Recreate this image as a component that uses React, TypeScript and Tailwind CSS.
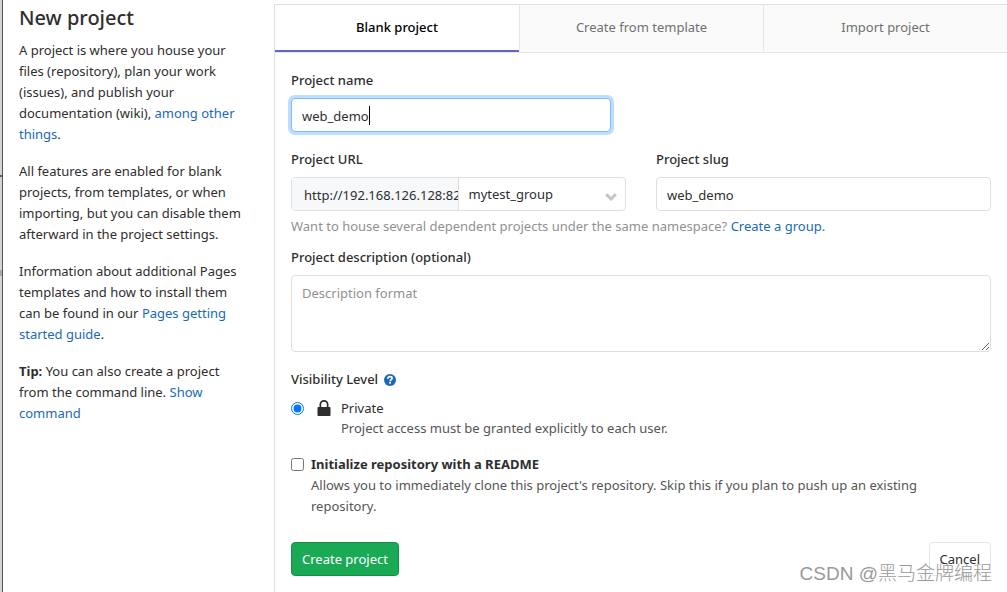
import React, { useState } from 'react';

const tabs = [
  { id: 'blank', title: 'Blank project' },
  { id: 'template', title: 'Create from template' },
  { id: 'import', title: 'Import project' },
];

const linkClass = 'text-[#1b69b6] hover:underline';
const labelClass = 'block mb-[7px] font-medium';
const inputClass = 'h-[34px] w-full rounded-[4px] border border-[#dfdfdf] bg-white px-[10px] pt-[2px] outline-none';

function LockIcon() {
  return (
    <svg viewBox="0 0 14 16" className="h-4 w-[14px]" fill="#2e2e2e" aria-hidden="true">
      <path d="M7 0a4.5 4.5 0 0 0-4.5 4.5V7H1.2A.7.7 0 0 0 .5 7.7v7.6a.7.7 0 0 0 .7.7h11.6a.7.7 0 0 0 .7-.7V7.7a.7.7 0 0 0-.7-.7h-1.3V4.5A4.5 4.5 0 0 0 7 0zm0 1.7a2.8 2.8 0 0 1 2.8 2.8V7H4.2V4.5A2.8 2.8 0 0 1 7 1.7z" />
    </svg>
  );
}

function HelpIcon() {
  return (
    <svg viewBox="0 0 12 12" className="size-3" aria-hidden="true">
      <circle cx="6" cy="6" r="6" fill="#1b69b6" />
      <path d="M3.9 4.7C4 3.3 4.9 2.7 6 2.7c1.3 0 2.1.7 2.1 1.6 0 1.4-1.9 1.3-1.9 2.9" fill="none" stroke="#fff" strokeWidth="1.7" />
      <rect x="5.2" y="8" width="1.8" height="1.6" fill="#fff" />
    </svg>
  );
}

export default function NewProject() {
  const [activeTab, setActiveTab] = useState('blank');
  const [name, setName] = useState('web_demo');
  const [slug, setSlug] = useState('web_demo');

  return (
    <div className="relative flex min-h-screen overflow-hidden bg-white font-['Noto_Sans','Open_Sans',sans-serif] text-[13px] leading-[21px] text-[#2e2e2e]">
      <div className="flex w-[3px] shrink-0 flex-col border-r border-[#555] bg-[#d4d4d4]">
        <div className="mt-[175px] h-[2px] bg-[#6650a8]" />
        <div className="mt-[93px] h-[6px] bg-[#a8a8a8]" />
      </div>

      <aside className="w-[271px] shrink-0 pl-4 pr-6 pt-1">
        <h1 className="mb-2 text-[20px] font-medium leading-7">New project</h1>
        <p className="mb-4">
          A project is where you house your files (repository), plan your work (issues), and publish your documentation (wiki),{' '}
          <a href="#features" className={linkClass}>among other things</a>.
        </p>
        <p className="mb-4">
          All features are enabled for blank projects, from templates, or when importing, but you can disable them afterward in the project settings.
        </p>
        <p className="mb-4">
          Information about additional Pages templates and how to install them can be found in our{' '}
          <a href="#pages" className={linkClass}>Pages getting started guide</a>.
        </p>
        <p>
          <strong>Tip:</strong> You can also create a project from the command line.{' '}
          <a href="#command" className={linkClass}>Show command</a>
        </p>
      </aside>

      <main className="mt-1 min-w-0 flex-1 border-l border-t border-[#dfdfdf]">
        <div role="tablist" className="grid grid-cols-3 border-b border-[#e5e5e5]">
          {tabs.map((tab) => (
            <button
              key={tab.id}
              type="button"
              role="tab"
              aria-selected={activeTab === tab.id}
              onClick={() => setActiveTab(tab.id)}
              className={`h-[47px] border-b-2 not-first:border-l not-first:border-l-[#e5e5e5] ${
                activeTab === tab.id
                  ? 'border-b-[#6666c4] bg-white font-medium text-black'
                  : 'border-b-transparent bg-[#fafafa] text-[#707070]'
              }`}
            >
              {tab.title}
            </button>
          ))}
        </div>

        <form className="px-4 pb-4 pt-[17px]" onSubmit={(e) => e.preventDefault()}>
          <div className="mb-[17px]">
            <label htmlFor="name" className={labelClass}>Project name</label>
            <div className="relative max-w-80">
              <input
                id="name"
                value={name}
                onChange={(e) => setName(e.target.value)}
                className="h-[34px] w-full rounded-[4px] border border-[#80bdff] bg-white px-[10px] pt-[2px] caret-transparent shadow-[0_0_0_3px_#bfdeff] outline-none"
              />
              <span className="absolute left-[78px] top-2 h-[19px] w-px bg-black" />
            </div>
          </div>

          <div className="grid grid-cols-2 gap-[30px]">
            <div>
              <label htmlFor="namespace" className={labelClass}>Project URL</label>
              <div className="flex h-[34px] rounded-[4px] border border-[#dfdfdf]">
                <div className="flex w-1/2 items-center overflow-hidden whitespace-nowrap border-r border-[#dfdfdf] bg-[#f6f8fa] pl-3 pt-[2px]">
                  http://192.168.126.128:82
                </div>
                <div className="relative w-1/2">
                  <select id="namespace" className="h-full w-full appearance-none bg-transparent px-[10px] outline-none">
                    <option>mytest_group</option>
                  </select>
                  <svg viewBox="0 0 12 8" className="pointer-events-none absolute right-2 top-[15px] h-2 w-3" fill="none" stroke="#c4c4c4" strokeWidth="3" aria-hidden="true">
                    <path d="M1.2 1.2 6 6l4.8-4.8" />
                  </svg>
                </div>
              </div>
            </div>
            <div>
              <label htmlFor="slug" className={labelClass}>Project slug</label>
              <input id="slug" value={slug} onChange={(e) => setSlug(e.target.value)} className={inputClass} />
            </div>
          </div>
          <p className="mb-[10px] mt-[5px] text-[#919191]">
            Want to house several dependent projects under the same namespace?{' '}
            <a href="#group" className={linkClass}>Create a group.</a>
          </p>

          <label htmlFor="description" className={labelClass}>Project description (optional)</label>
          <textarea
            id="description"
            placeholder="Description format"
            className="mb-[17px] block h-[77px] w-full rounded-[4px] border border-[#dfdfdf] px-[10px] py-[7px] outline-none placeholder:text-[#919191]"
          />

          <fieldset className="mb-4">
            <legend className="mb-2 flex items-center gap-[6px] font-medium">
              Visibility Level
              <a href="#visibility" aria-label="Visibility help"><HelpIcon /></a>
            </legend>
            <label className="flex items-start">
              <input type="radio" name="visibility" defaultChecked className="mt-1 size-[13px]" />
              <span className="ml-[13px] mt-[2px]"><LockIcon /></span>
              <span className="ml-[10px]">
                <span className="block leading-[21px]">Private</span>
                <span className="block leading-[19px] text-[#555]">Project access must be granted explicitly to each user.</span>
              </span>
            </label>
          </fieldset>

          <label className="mb-[25px] flex items-start pr-4">
            <input type="checkbox" className="mt-1 size-[13px] shrink-0" />
            <span className="ml-[7px]">
              <strong className="block">Initialize repository with a README</strong>
              <span className="block text-[#555]">
                Allows you to immediately clone this project's repository. Skip this if you plan to push up an existing repository.
              </span>
            </span>
          </label>

          <div className="flex justify-between">
            <button type="submit" className="h-[34px] rounded-[4px] border border-[#168f48] bg-[#1aaa55] px-[10px] text-white">
              Create project
            </button>
            <button type="button" className="h-[34px] rounded-[4px] border border-[#e5e5e5] bg-white px-[10px]">
              Cancel
            </button>
          </div>
        </form>
      </main>

      <div className="pointer-events-none absolute bottom-1 right-[15px] font-['Liberation_Sans','Noto_Sans_CJK_SC',sans-serif] text-[19px] font-light leading-7 text-[#999] [text-shadow:1px_1px_0_#fff]">
        CSDN @黑马金牌编程
      </div>
    </div>
  );
}
